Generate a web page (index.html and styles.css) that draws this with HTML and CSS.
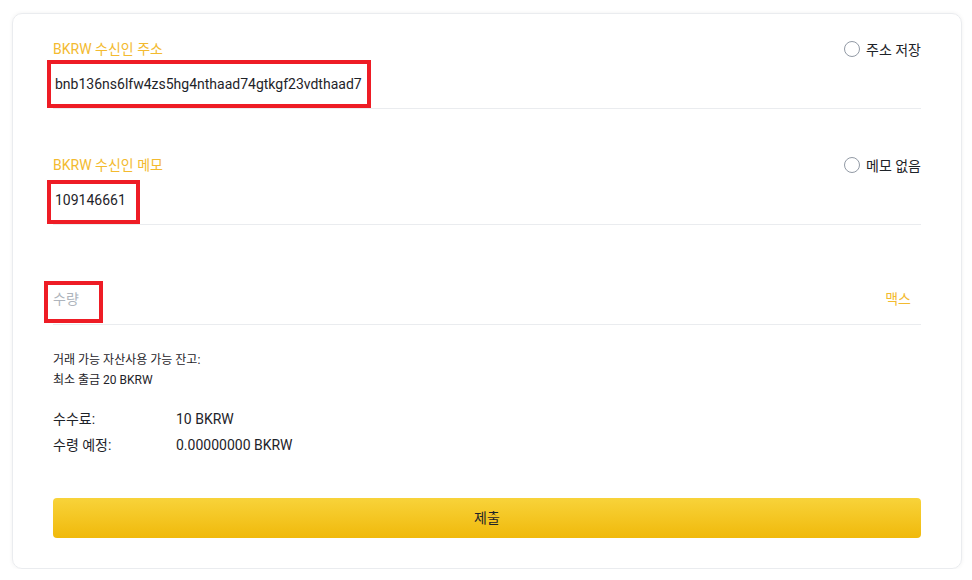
FILE: index.html
```html
<!DOCTYPE html>
<html lang="ko">
<head>
    <meta charset="UTF-8">
    <meta name="viewport" content="width=device-width, initial-scale=1.0">
    <title>BKRW 출금</title>
    <link rel="stylesheet" href="styles.css">
</head>
<body>
    <div class="card">
        <!-- Address -->
        <div class="field field-address">
            <div class="field-head">
                <span class="field-label">BKRW 수신인 주소</span>
                <label class="check"><span class="radio"></span>주소 저장</label>
            </div>
            <div class="field-value">
                <span class="mark mark-address">bnb136ns6lfw4zs5hg4nthaad74gtkgf23vdthaad7</span>
            </div>
        </div>

        <!-- Memo -->
        <div class="field field-memo">
            <div class="field-head">
                <span class="field-label">BKRW 수신인 메모</span>
                <label class="check"><span class="radio"></span>메모 없음</label>
            </div>
            <div class="field-value">
                <span class="mark mark-memo">109146661</span>
            </div>
        </div>

        <!-- Amount -->
        <div class="field field-amount">
            <span class="mark mark-amount">수량</span>
            <span class="max">맥스</span>
        </div>

        <div class="balance">
            <div>거래 가능 자산사용 가능 잔고:</div>
            <div>최소 출금 20 BKRW</div>
        </div>

        <div class="fees">
            <div class="fee-row"><span class="fee-label">수수료:</span><span>10 BKRW</span></div>
            <div class="fee-row"><span class="fee-label">수령 예정:</span><span>0.00000000 BKRW</span></div>
        </div>

        <button class="submit" type="button">제출</button>
    </div>
</body>
</html>
```

FILE: styles.css
```css
/* General body styling */
body {
    margin: 0;
    padding: 13px 10px 0 12px;
    background: #ffffff;
    font-family: Roboto, "Noto Sans CJK KR", sans-serif;
    color: #1e2329;
}

/* Card */
.card {
    border: 1px solid #eaecef;
    border-radius: 10px;
    box-shadow: 0 0 4px rgba(0, 0, 0, 0.06);
    padding: 24px 40px 30px 40px;
}

/* Fields */
.field {
    border-bottom: 1px solid #eaecef;
}

.field-head {
    display: flex;
    justify-content: space-between;
    align-items: center;
    height: 20px;
}

.field-label {
    font-size: 14px;
    color: #f3ba2f;
}

.check {
    display: flex;
    align-items: center;
    gap: 6px;
    font-size: 14px;
    color: #1e2329;
    margin-top: 2px;
}

.radio {
    width: 14px;
    height: 14px;
    border: 1px solid #929aa5;
    border-radius: 50%;
}

.field-value {
    margin-top: 2px;
}

.field-memo {
    margin-top: 45px;
}

.field-memo .field-value {
    margin-top: 6px;
}

/* Red annotation boxes */
.mark {
    display: inline-block;
    box-sizing: border-box;
    border: 4px solid #ee1c25;
    vertical-align: top;
    font-size: 14px;
    color: #1e2329;
}

.mark-address {
    width: 324px;
    height: 48px;
    line-height: 40px;
    margin-left: -6px;
    padding-left: 4px;
}

.mark-memo {
    width: 93px;
    height: 44px;
    line-height: 32px;
    margin-left: -6px;
    padding-left: 4px;
}

.field-amount {
    margin-top: 56px;
    display: flex;
    justify-content: space-between;
    align-items: flex-start;
    height: 43px;
}

.mark-amount {
    width: 59px;
    height: 42px;
    line-height: 28px;
    margin-left: -9px;
    padding-left: 5px;
    color: #aeb4bc;
}

.max {
    font-size: 14px;
    color: #f3ba2f;
    line-height: 28px;
    margin-top: 4px;
    padding-right: 10px;
}

/* Balance info */
.balance {
    margin-top: 25px;
    font-size: 12px;
    line-height: 20px;
    color: #1e2329;
}

.fees {
    margin-top: 16px;
    font-size: 14px;
}

.fee-row {
    display: flex;
    line-height: 26px;
}

.fee-label {
    width: 123px;
}

/* Submit button */
.submit {
    display: block;
    width: 100%;
    height: 40px;
    margin-top: 40px;
    border: none;
    border-radius: 4px;
    background: linear-gradient(to bottom, #f8d33a, #f0b90b);
    font-family: Roboto, "Noto Sans CJK KR", sans-serif;
    font-size: 14px;
    color: #1e2329;
    padding-bottom: 3px;
    cursor: pointer;
}
```
